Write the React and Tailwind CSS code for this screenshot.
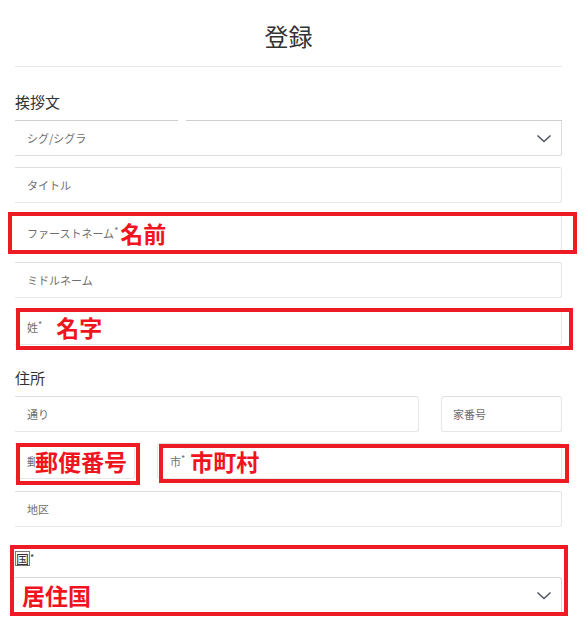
import React from "react";

const RED_TEXT = "text-[#f0141e] font-bold text-[23px] leading-none";

function Chevron() {
  return (
    <svg width="16" height="9" viewBox="0 0 16 9" className="shrink-0">
      <polyline points="1.5,1.5 8,7.5 14.5,1.5" fill="none" stroke="#4d5561" strokeWidth="1.5" />
    </svg>
  );
}

function Star() {
  return <span className="text-[9px] align-top relative top-[-1px]">*</span>;
}

export default function App() {
  return (
    <div
      className="w-[588px] h-[637px] bg-white overflow-hidden"
      style={{ fontFamily: '"Noto Sans CJK JP", "Noto Sans", sans-serif' }}
    >
      <div className="ml-[15px] w-[547px] h-[66px] pt-[6px] flex items-center justify-center">
        <h1 className="text-[24px] leading-[32px] text-[#333333] font-normal">登録</h1>
      </div>
      <div className="ml-[15px] w-[547px] h-px bg-[#e8e8e8]" />

      <div className="ml-[15px] w-[547px] text-[11px] text-[#6e6e6e]">
        {/* 挨拶文 */}
        <div className="mt-[25px] h-[20px] leading-[20px] text-[15px] text-[#333333]">挨拶文</div>
        <div className="mt-[8px]">
          <div className="flex gap-[8px]">
            <div className="w-[163px] h-px bg-[#cfcfcf]" />
            <div className="flex-1 h-px bg-[#cfcfcf]" />
          </div>
          <div className="h-[35px] border-b border-r border-[#dedede] rounded-br-[3px] flex items-center justify-between pl-[12px] pr-[9px]">
            <span>シグ/シグラ</span>
            <Chevron />
          </div>
        </div>

        <div className="mt-[11px] h-[36px] border border-l-0 border-[#e6e6e6] border-t-[#dedede] rounded-r-[3px] flex items-center pl-[12px]">
          タイトル
        </div>

        {/* first name */}
        <div className="relative mt-[12px] h-[36px] border border-l-0 border-[#e6e6e6] border-t-[#dedede] rounded-r-[3px] flex items-center pl-[12px]">
          <span>
            ファーストネーム<Star />
          </span>
          <span className={`${RED_TEXT} ml-[2px]`}>名前</span>
          <span className="absolute left-[-7px] right-[-16px] top-[-4px] bottom-[-4px] border-[4px] border-[#ed1c24] pointer-events-none" />
        </div>

        <div className="mt-[11px] h-[36px] border border-l-0 border-[#e6e6e6] border-t-[#dedede] rounded-r-[3px] flex items-center pl-[12px]">
          ミドルネーム
        </div>

        {/* last name */}
        <div className="relative mt-[11px] h-[36px] border border-l-0 border-[#e6e6e6] border-t-[#dedede] rounded-r-[3px] flex items-center pl-[12px]">
          <span>
            姓<Star />
          </span>
          <span className={`${RED_TEXT} ml-[14px]`}>名字</span>
          <span className="absolute left-[1px] right-[-12px] top-[-2px] bottom-[-6px] border-[4px] border-[#ed1c24] pointer-events-none" />
        </div>

        {/* 住所 */}
        <div className="mt-[23px] h-[20px] leading-[20px] text-[15px] text-[#333333]">住所</div>
        <div className="mt-[8px] flex gap-[22px]">
          <div className="flex-1 h-[36px] border border-l-0 border-[#e6e6e6] border-t-[#dedede] rounded-r-[3px] flex items-center pl-[12px]">
            通り
          </div>
          <div className="w-[121px] h-[36px] border border-[#e6e6e6] border-t-[#dedede] rounded-[3px] flex items-center pl-[11px]">
            家番号
          </div>
        </div>

        <div className="mt-[11px] flex gap-[22px]">
          <div className="relative w-[120px] h-[36px] border border-l-0 border-[#e6e6e6] border-t-[#dedede] rounded-r-[3px] flex items-center pl-[12px]">
            <span className="w-[8px] overflow-hidden whitespace-nowrap shrink-0">郵</span>
            <span className={RED_TEXT}>郵便番号</span>
            <span className="absolute left-[1px] right-[-6px] top-[-1px] bottom-[-7px] border-[4px] border-[#ed1c24] pointer-events-none" />
          </div>
          <div className="relative flex-1 h-[36px] border border-[#e6e6e6] border-t-[#dedede] rounded-[3px] flex items-center pl-[12px]">
            <span>
              市<Star />
            </span>
            <span className={`${RED_TEXT} ml-[5px]`}>市町村</span>
            <span className="absolute left-[1px] right-[-8px] top-[0px] bottom-[-5px] border-[4px] border-[#ed1c24] pointer-events-none" />
          </div>
        </div>

        <div className="mt-[12px] h-[36px] border border-l-0 border-[#e6e6e6] border-t-[#dedede] rounded-r-[3px] flex items-center pl-[12px]">
          地区
        </div>

        {/* country */}
        <div className="relative mt-[22px]">
          <div className="h-[18px] flex items-center text-[13px] text-[#333333]">
            <span className="border border-[#7a7a7a] leading-[13px]">国</span>
            <span className="text-[9px] self-start mt-[2px]">*</span>
          </div>
          <div className="mt-[10px] h-[36px] border-t border-r border-[#d6d6d6] rounded-tr-[3px] flex items-center justify-between pl-[7px] pr-[9px]">
            <span className={RED_TEXT}>居住国</span>
            <Chevron />
          </div>
          <span className="absolute left-[-5px] right-[-6px] top-[-4px] bottom-[-3px] border-[4px] border-[#ed1c24] pointer-events-none" />
        </div>
      </div>
    </div>
  );
}
